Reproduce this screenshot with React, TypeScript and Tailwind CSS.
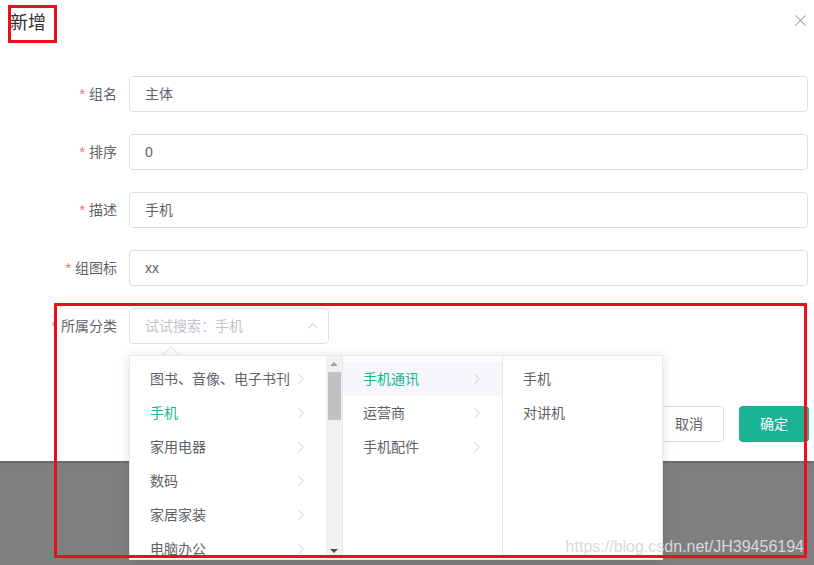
import { X, ChevronUp, ChevronRight } from 'lucide-react';

const fields = [
  { label: '组名', value: '主体' },
  { label: '排序', value: '0' },
  { label: '描述', value: '手机' },
  { label: '组图标', value: 'xx' },
];

const level1 = ['图书、音像、电子书刊', '手机', '家用电器', '数码', '家居家装', '电脑办公'];
const level2 = ['手机通讯', '运营商', '手机配件'];
const level3 = ['手机', '对讲机'];

export default function App() {
  return (
    <div
      className="relative w-[814px] h-[565px] overflow-hidden bg-[#7f7f7f] text-[14px] text-[#606266]"
      style={{ fontFamily: '"Liberation Sans", "Noto Sans CJK SC", sans-serif' }}
    >
      {/* Dialog */}
      <div className="bg-white h-[461px] flex flex-col shadow-[0_1px_3px_rgba(0,0,0,0.3)]">
        <div className="h-[46px] flex items-center justify-between pl-[10px] pr-[4px]">
          <span className="text-[18px] text-[#303133] leading-none mt-[-1px]">新增</span>
          <X className="w-[19px] h-[19px] text-[#909399] mt-[-5px]" strokeWidth={1.3} />
        </div>

        <div className="pt-[30px] pr-[6px]">
          {fields.map((f) => (
            <div key={f.label} className="flex items-center h-[36px] mb-[22px]">
              <label className="w-[129px] shrink-0 text-right pr-[12px]">
                <span className="text-[#f56c6c] mr-[4px]">*</span>
                {f.label}
              </label>
              <div className="flex-1 h-[36px] border border-[#dcdfe6] rounded-[4px] flex items-center px-[15px] text-[#606266]">
                {f.value}
              </div>
            </div>
          ))}

          <div className="flex items-center h-[36px] mb-[22px]">
            <label className="w-[129px] shrink-0 text-right pr-[12px]">
              <span className="text-[#f56c6c] mr-[4px]">*</span>
              所属分类
            </label>
            <div className="w-[200px] h-[36px] border border-[#dcdfe6] rounded-[4px] flex items-center justify-between pl-[15px] pr-[6px] text-[#c0c4cc]">
              <span>试试搜索：手机</span>
              <ChevronUp className="w-[18px] h-[18px] text-[#c0c4cc]" strokeWidth={1.3} />
            </div>
          </div>
        </div>

        <div className="mt-[40px] flex justify-end gap-[15px] pr-[5px]">
          <button className="w-[70px] h-[36px] border border-[#dcdfe6] rounded-[4px] bg-white text-[#606266]">取消</button>
          <button className="w-[70px] h-[36px] rounded-[4px] bg-[#1ab394] text-white">确定</button>
        </div>
      </div>

      {/* Cascader dropdown */}
      <div className="absolute left-[129px] top-[355px] z-10">
        <div className="absolute left-[36px] top-[-6px] w-[12px] h-[12px] bg-white border-l border-t border-[#e4e7ed] rotate-45" />
        <div className="relative flex w-[534px] h-[205px] bg-white border border-[#e4e7ed] shadow-[0_2px_12px_rgba(0,0,0,0.12)]">
          {/* column 1 */}
          <div className="w-[213px] flex border-r border-[#e4e7ed] overflow-hidden">
            <div className="w-[196px] pt-[6px]">
              {level1.map((t, i) => (
                <div key={t} className="h-[34px] flex items-center justify-between pl-[20px] pr-[16px]">
                  <span className={i === 1 ? 'text-[#1ab394]' : 'text-[#606266]'}>{t}</span>
                  <ChevronRight className="w-[18px] h-[18px] text-[#c0c4cc]" strokeWidth={1.2} />
                </div>
              ))}
            </div>
            <div className="w-[16px] bg-[#f1f1f1] flex flex-col items-center">
              <div className="h-[16px] flex items-center justify-center">
                <div className="w-0 h-0 border-l-[4px] border-r-[4px] border-b-[4px] border-l-transparent border-r-transparent border-b-[#a3a3a3]" />
              </div>
              <div className="w-[13px] h-[48px] bg-[#c1c1c1]" />
              <div className="flex-1" />
              <div className="h-[16px] flex items-center justify-center">
                <div className="w-0 h-0 border-l-[4px] border-r-[4px] border-t-[4px] border-l-transparent border-r-transparent border-t-[#505050]" />
              </div>
            </div>
          </div>
          {/* column 2 */}
          <div className="w-[160px] pt-[6px] border-r border-[#e4e7ed]">
            {level2.map((t, i) => (
              <div
                key={t}
                className={`h-[34px] flex items-center justify-between pl-[20px] pr-[16px] ${i === 0 ? 'bg-[#f5f7fa]' : ''}`}
              >
                <span className={i === 0 ? 'text-[#1ab394]' : 'text-[#606266]'}>{t}</span>
                <ChevronRight className="w-[18px] h-[18px] text-[#c0c4cc]" strokeWidth={1.2} />
              </div>
            ))}
          </div>
          {/* column 3 */}
          <div className="flex-1 pt-[6px]">
            {level3.map((t) => (
              <div key={t} className="h-[34px] flex items-center pl-[20px]">
                {t}
              </div>
            ))}
          </div>
        </div>
      </div>

      {/* watermark */}
      <div className="absolute right-[10px] top-[535px] z-20 text-[16px] text-[#d9d9d9]">
        https://blog.csdn.net/JH39456194
      </div>

      {/* annotation boxes */}
      <div className="absolute left-[8px] top-[5px] w-[49px] h-[38px] border-[3px] border-[#e8101a] z-30" />
      <div className="absolute left-[54px] top-[303px] w-[753px] h-[255px] border-[3px] border-[#e8101a] z-30" />
    </div>
  );
}
